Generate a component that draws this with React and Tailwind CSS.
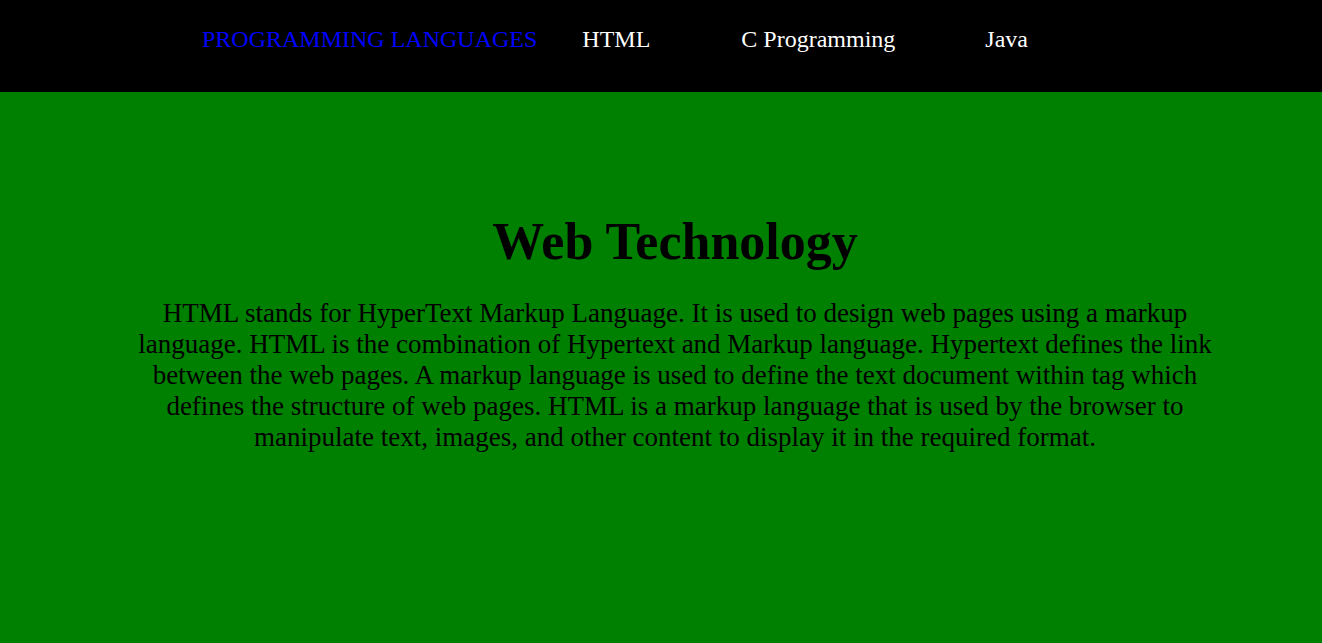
export default function App() {
  const links = [
    { label: "HTML", cls: "ml-[45px]" },
    { label: "C Programming", cls: "ml-[91px]" },
    { label: "Java", cls: "ml-[90px]" },
  ];

  return (
    <div className="min-h-[643px] bg-[#008000] font-['Liberation_Serif','Times_New_Roman',serif]">
      <nav className="h-[92px] bg-black flex items-start pt-[26px] pl-[202px] text-[24px] leading-[normal]">
        <a href="#" className="text-[#0000ff]">PROGRAMMING LANGUAGES</a>
        {links.map((l) => (
          <a key={l.label} href="#" className={`text-white ${l.cls}`}>
            {l.label}
          </a>
        ))}
      </nav>

      <main className="ml-[128px] w-[1094px] pt-[120px] text-center text-black">
        <h1 className="text-[52px] font-bold leading-[normal]">Web Technology</h1>
        <p className="mt-[27px] text-[27px] leading-[normal]">
          HTML stands for HyperText Markup Language. It is used to design web pages using a markup
          language. HTML is the combination of Hypertext and Markup language. Hypertext defines the link
          between the web pages. A markup language is used to define the text document within tag which
          defines the structure of web pages. HTML is a markup language that is used by the browser to
          manipulate text, images, and other content to display it in the required format.
        </p>
      </main>
    </div>
  );
}
